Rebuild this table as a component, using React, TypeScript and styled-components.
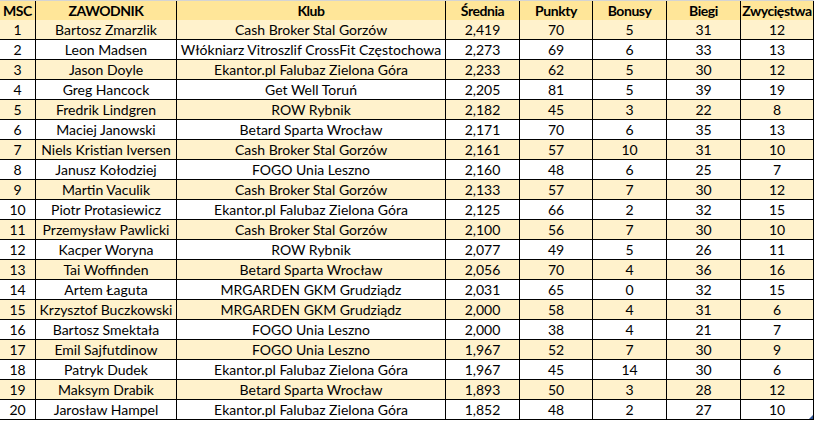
import React from "react";
import styled, { createGlobalStyle } from "styled-components";

const Global = createGlobalStyle`
  html, body { margin: 0; padding: 0; background: #ffffff; }
  body { font-family: Lato, "Noto Sans", "Liberation Sans", sans-serif; }
`;

const COLS = "36px 141px 269px 74px 73px 74px 74px 73px";

const Sheet = styled.div`
  position: relative;
  width: 815px;
  display: flex;
  flex-direction: column;
`;

const Row = styled.div<{ $bg: string; $head?: boolean }>`
  display: grid;
  grid-template-columns: ${COLS};
  background: ${(p) => p.$bg};
  width: 814px;
  box-sizing: border-box;
  border-top: ${(p) => (p.$head ? "1px solid #d4d4d4" : "none")};
  height: 20px;
`;

const Cell = styled.div<{ $head?: boolean }>`
  box-sizing: border-box;
  border-right: 1px solid #000;
  border-bottom: 1px solid #000;
  display: flex;
  align-items: center;
  justify-content: center;
  white-space: nowrap;
  overflow: visible;
  font-size: 14px;
  line-height: 19px;
  color: #000;
  font-weight: ${(p) => (p.$head ? 700 : 400)};
  letter-spacing: ${(p) => (p.$head ? "-0.45px" : "0")};
`;

const Handle = styled.div`
  position: absolute;
  right: 2px;
  bottom: 1px;
  width: 4px;
  height: 4px;
  background: #2f5597;
  clip-path: polygon(100% 0, 100% 100%, 0 100%);
`;

const headers = ["MSC", "ZAWODNIK", "Klub", "Średnia", "Punkty", "Bonusy", "Biegi", "Zwycięstwa"];

const data: (string | number)[][] = [
  [1, "Bartosz Zmarzlik", "Cash Broker Stal Gorzów", "2,419", 70, 5, 31, 12],
  [2, "Leon Madsen", "Włókniarz Vitroszlif CrossFit Częstochowa", "2,273", 69, 6, 33, 13],
  [3, "Jason Doyle", "Ekantor.pl Falubaz Zielona Góra", "2,233", 62, 5, 30, 12],
  [4, "Greg Hancock", "Get Well Toruń", "2,205", 81, 5, 39, 19],
  [5, "Fredrik Lindgren", "ROW Rybnik", "2,182", 45, 3, 22, 8],
  [6, "Maciej Janowski", "Betard Sparta Wrocław", "2,171", 70, 6, 35, 13],
  [7, "Niels Kristian Iversen", "Cash Broker Stal Gorzów", "2,161", 57, 10, 31, 10],
  [8, "Janusz Kołodziej", "FOGO Unia Leszno", "2,160", 48, 6, 25, 7],
  [9, "Martin Vaculik", "Cash Broker Stal Gorzów", "2,133", 57, 7, 30, 12],
  [10, "Piotr Protasiewicz", "Ekantor.pl Falubaz Zielona Góra", "2,125", 66, 2, 32, 15],
  [11, "Przemysław Pawlicki", "Cash Broker Stal Gorzów", "2,100", 56, 7, 30, 10],
  [12, "Kacper Woryna", "ROW Rybnik", "2,077", 49, 5, 26, 11],
  [13, "Tai Woffinden", "Betard Sparta Wrocław", "2,056", 70, 4, 36, 16],
  [14, "Artem Łaguta", "MRGARDEN GKM Grudziądz", "2,031", 65, 0, 32, 15],
  [15, "Krzysztof Buczkowski", "MRGARDEN GKM Grudziądz", "2,000", 58, 4, 31, 6],
  [16, "Bartosz Smektała", "FOGO Unia Leszno", "2,000", 38, 4, 21, 7],
  [17, "Emil Sajfutdinow", "FOGO Unia Leszno", "1,967", 52, 7, 30, 9],
  [18, "Patryk Dudek", "Ekantor.pl Falubaz Zielona Góra", "1,967", 45, 14, 30, 6],
  [19, "Maksym Drabik", "Betard Sparta Wrocław", "1,893", 50, 3, 28, 12],
  [20, "Jarosław Hampel", "Ekantor.pl Falubaz Zielona Góra", "1,852", 48, 2, 27, 10],
];

export default function App() {
  return (
    <>
      <Global />
      <Sheet>
        <Row $bg="#ffe699" $head>
          {headers.map((h) => (
            <Cell key={h} $head>
              {h}
            </Cell>
          ))}
        </Row>
        {data.map((r, i) => (
          <Row key={i} $bg={i % 2 === 0 ? "#fff2cc" : "#ffffff"}>
            {r.map((v, j) => (
              <Cell key={j}>{v}</Cell>
            ))}
          </Row>
        ))}
        <Handle />
      </Sheet>
    </>
  );
}
